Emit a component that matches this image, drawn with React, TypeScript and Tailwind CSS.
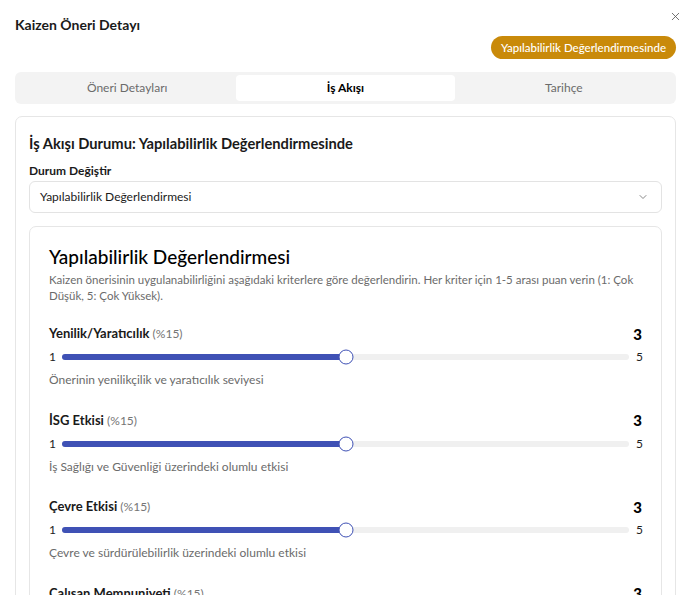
import { X, ChevronDown } from 'lucide-react'

const criteria = [
  { name: 'Yenilik/Yaratıcılık', weight: '(%15)', value: 3, hint: 'Önerinin yenilikçilik ve yaratıcılık seviyesi' },
  { name: 'İSG Etkisi', weight: '(%15)', value: 3, hint: 'İş Sağlığı ve Güvenliği üzerindeki olumlu etkisi' },
  { name: 'Çevre Etkisi', weight: '(%15)', value: 3, hint: 'Çevre ve sürdürülebilirlik üzerindeki olumlu etkisi' },
  { name: 'Çalışan Memnuniyeti', weight: '(%15)', value: 3, hint: 'Çalışan memnuniyeti üzerindeki olumlu etkisi' },
]

function Criterion({ c }: { c: (typeof criteria)[number] }) {
  const pct = ((c.value - 1) / 4) * 100
  return (
    <div className="flex flex-col">
      <div className="flex items-center justify-between h-[18px]">
        <p className="text-[13px] font-bold text-[#1a1a1a]">
          {c.name} <span className="text-[12px] font-normal text-[#757575]">{c.weight}</span>
        </p>
        <span className="text-[15px] font-black text-black">{c.value}</span>
      </div>
      <div className="flex items-center gap-[7px] mt-[6px] h-[16px]">
        <span className="text-[12px] text-[#222] w-[6px]">1</span>
        <div className="relative flex-1 h-[6px] rounded-full bg-[#f0f0f0]">
          <div className="absolute left-0 top-0 h-full rounded-full bg-[#3f51b5]" style={{ width: `${pct}%` }} />
          <div
            className="absolute top-1/2 w-[15px] h-[15px] -translate-x-1/2 -translate-y-1/2 rounded-full bg-white border-[1.5px] border-[#3f51b5]"
            style={{ left: `${pct}%` }}
          />
        </div>
        <span className="text-[12px] text-[#222] w-[6px]">5</span>
      </div>
      <p className="mt-[6px] text-[12px] text-[#6b6b6b]">{c.hint}</p>
    </div>
  )
}

export default function App() {
  return (
    <div className="w-[695px] h-[595px] overflow-hidden bg-white font-['Lato',sans-serif] text-[#1a1a1a]">
      <div className="relative px-[15px] pt-[15px]">
        <button className="absolute right-[13px] top-[10px] text-[#555]">
          <X size={13} strokeWidth={1.5} />
        </button>
        <h1 className="text-[14px] font-bold leading-[20px]">Kaizen Öneri Detayı</h1>
        <div className="flex justify-end mt-[1px] pr-[4px]">
          <span className="rounded-full bg-[#c98a0a] px-[10px] h-[23px] flex items-center text-[11.5px] font-medium text-white">
            Yapılabilirlik Değerlendirmesinde
          </span>
        </div>
        <div className="mt-[13px] grid grid-cols-3 rounded-[6px] bg-[#f3f3f3] p-[3px] h-[32px] mr-[4px]">
          <div className="flex items-center justify-center text-[12px] text-[#6b6b6b]">Öneri Detayları</div>
          <div className="flex items-center justify-center rounded-[4px] bg-white text-[12px] font-bold text-black">İş Akışı</div>
          <div className="flex items-center justify-center text-[12px] text-[#6b6b6b]">Tarihçe</div>
        </div>
        <div className="mt-[12px] mr-[4px] rounded-[7px] border border-[#e6e6e6] px-[13px] pt-[16px] h-[500px]">
          <h2 className="text-[14.7px] font-bold leading-[20px]">İş Akışı Durumu: Yapılabilirlik Değerlendirmesinde</h2>
          <p className="mt-[10px] text-[12px] font-bold leading-[16px]">Durum Değiştir</p>
          <div className="mt-[2px] flex items-center justify-between h-[32px] rounded-[6px] border border-[#e3e3e3] pl-[10px] pr-[12px]">
            <span className="text-[12px]">Yapılabilirlik Değerlendirmesi</span>
            <ChevronDown size={12} className="text-[#888]" />
          </div>
          <div className="mt-[13px] rounded-[7px] border border-[#e6e6e6] px-[19px] pt-[18px] h-[400px]">
            <h3 className="text-[19px] font-medium leading-[24px] text-black">Yapılabilirlik Değerlendirmesi</h3>
            <p className="mt-[3px] text-[11.5px] leading-[16px] text-[#6b6b6b]">
              Kaizen önerisinin uygulanabilirliğini aşağıdaki kriterlere göre değerlendirin. Her kriter için 1-5 arası puan verin (1: Çok Düşük, 5: Çok Yüksek).
            </p>
            <div className="mt-[21px] flex flex-col gap-[22.5px]">
              {criteria.map((c) => (
                <Criterion key={c.name} c={c} />
              ))}
            </div>
          </div>
        </div>
      </div>
    </div>
  )
}
